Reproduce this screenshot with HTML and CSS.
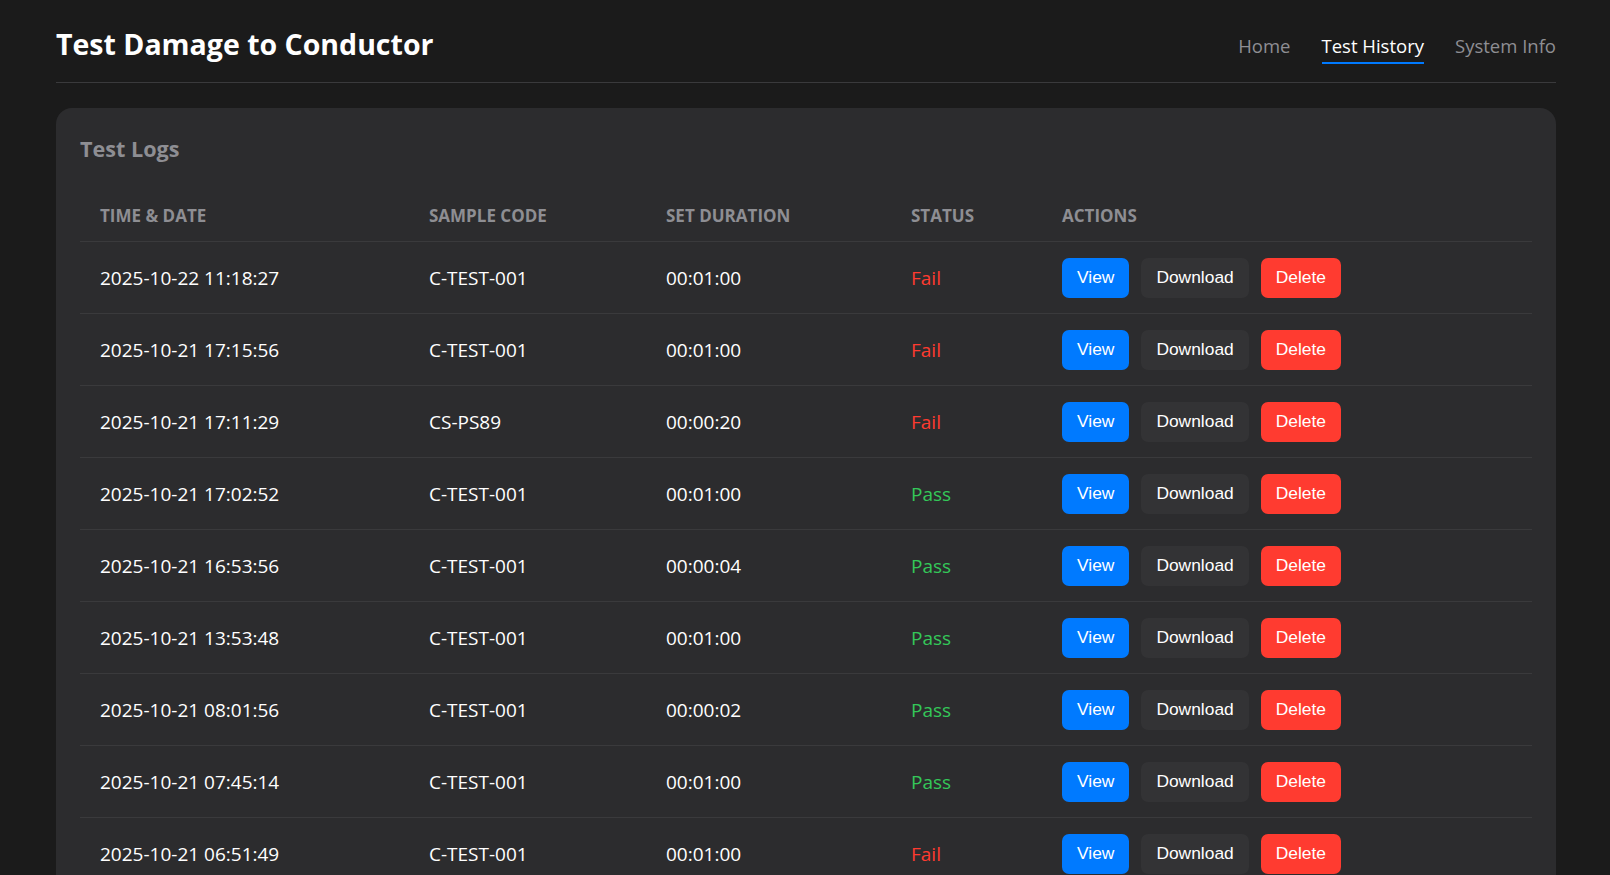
FILE: index.html
```html
<!DOCTYPE html>
<html lang="en">
<head>
<meta charset="utf-8">
<title>Test Damage to Conductor</title>
<link rel="stylesheet" href="styles.css">
</head>
<body>
<div class="container">
  <header class="site-header">
    <h1 class="site-title">Test Damage to Conductor</h1>
    <nav class="site-nav">
      <a class="nav-link" href="#">Home</a>
      <a class="nav-link active" href="#">Test History</a>
      <a class="nav-link" href="#">System Info</a>
    </nav>
  </header>

  <main class="card">
    <h2 class="card-title">Test Logs</h2>
    <table class="logs">
      <colgroup>
        <col class="c-time">
        <col class="c-code">
        <col class="c-dur">
        <col class="c-status">
        <col class="c-actions">
      </colgroup>
      <thead>
        <tr>
          <th>Time &amp; Date</th>
          <th>Sample Code</th>
          <th>Set Duration</th>
          <th>Status</th>
          <th>Actions</th>
        </tr>
      </thead>
      <tbody>
        <tr><td>2025-10-22 11:18:27</td><td>C-TEST-001</td><td>00:01:00</td><td class="fail">Fail</td><td><div class="actions"><button class="btn btn-view">View</button><button class="btn btn-dl">Download</button><button class="btn btn-del">Delete</button></div></td></tr>
        <tr><td>2025-10-21 17:15:56</td><td>C-TEST-001</td><td>00:01:00</td><td class="fail">Fail</td><td><div class="actions"><button class="btn btn-view">View</button><button class="btn btn-dl">Download</button><button class="btn btn-del">Delete</button></div></td></tr>
        <tr><td>2025-10-21 17:11:29</td><td>CS-PS89</td><td>00:00:20</td><td class="fail">Fail</td><td><div class="actions"><button class="btn btn-view">View</button><button class="btn btn-dl">Download</button><button class="btn btn-del">Delete</button></div></td></tr>
        <tr><td>2025-10-21 17:02:52</td><td>C-TEST-001</td><td>00:01:00</td><td class="pass">Pass</td><td><div class="actions"><button class="btn btn-view">View</button><button class="btn btn-dl">Download</button><button class="btn btn-del">Delete</button></div></td></tr>
        <tr><td>2025-10-21 16:53:56</td><td>C-TEST-001</td><td>00:00:04</td><td class="pass">Pass</td><td><div class="actions"><button class="btn btn-view">View</button><button class="btn btn-dl">Download</button><button class="btn btn-del">Delete</button></div></td></tr>
        <tr><td>2025-10-21 13:53:48</td><td>C-TEST-001</td><td>00:01:00</td><td class="pass">Pass</td><td><div class="actions"><button class="btn btn-view">View</button><button class="btn btn-dl">Download</button><button class="btn btn-del">Delete</button></div></td></tr>
        <tr><td>2025-10-21 08:01:56</td><td>C-TEST-001</td><td>00:00:02</td><td class="pass">Pass</td><td><div class="actions"><button class="btn btn-view">View</button><button class="btn btn-dl">Download</button><button class="btn btn-del">Delete</button></div></td></tr>
        <tr><td>2025-10-21 07:45:14</td><td>C-TEST-001</td><td>00:01:00</td><td class="pass">Pass</td><td><div class="actions"><button class="btn btn-view">View</button><button class="btn btn-dl">Download</button><button class="btn btn-del">Delete</button></div></td></tr>
        <tr><td>2025-10-21 06:51:49</td><td>C-TEST-001</td><td>00:01:00</td><td class="fail">Fail</td><td><div class="actions"><button class="btn btn-view">View</button><button class="btn btn-dl">Download</button><button class="btn btn-del">Delete</button></div></td></tr>
      </tbody>
    </table>
  </main>
</div>
</body>
</html>
```

FILE: styles.css
```css
html, body {
  margin: 0;
  padding: 0;
  background: #1b1b1b;
}

body {
  font-family: "Open Sans", "Noto Sans", sans-serif;
  color: #ffffff;
}

.container {
  width: 1500px;
  margin: 0 54px 0 56px;
}

.site-header {
  display: flex;
  justify-content: space-between;
  align-items: center;
  padding: 24px 0 18px;
  border-bottom: 1px solid #3a3a3c;
}

.site-title {
  margin: 0;
  font-size: 28.5px;
  font-weight: 700;
  line-height: 40px;
  color: #ffffff;
}

.site-nav {
  display: flex;
  gap: 31px;
  align-self: flex-end;
}

.nav-link {
  font-size: 18.5px;
  line-height: 25px;
  color: #8e8e93;
  text-decoration: none;
  padding-bottom: 4px;
  border-bottom: 2px solid transparent;
}

.nav-link.active {
  color: #ffffff;
  border-bottom-color: #007aff;
}

.card {
  display: block;
  margin-top: 25px;
  background: #2c2c2e;
  border-radius: 16px;
  padding: 26px 24px 25px;
}

.card-title {
  margin: 0 0 26px;
  font-size: 21.6px;
  font-weight: 700;
  line-height: 30px;
  color: #8e8e93;
}

.logs {
  width: 100%;
  table-layout: fixed;
  border-collapse: collapse;
}

.c-time { width: 329px; }
.c-code { width: 237px; }
.c-dur { width: 245px; }
.c-status { width: 151px; }

.logs th {
  text-align: left;
  font-size: 17px;
  font-weight: 700;
  text-transform: uppercase;
  color: #8e8e93;
  padding: 14px 20px 14px;
  line-height: 23px;
  border-bottom: 1px solid #3a3a3c;
}

.logs td {
  font-size: 19px;
  padding: 15.5px 20px;
  line-height: 26px;
  border-bottom: 1px solid #3a3a3c;
  vertical-align: middle;
  color: #ffffff;
}

.logs td.fail { color: #ff3b30; }
.logs td.pass { color: #34c759; }

.actions {
  display: flex;
  gap: 12px;
}

.btn {
  height: 40px;
  padding: 0 15px;
  border: none;
  border-radius: 7px;
  font-family: "Liberation Sans", Arial, sans-serif;
  font-size: 17.4px;
  color: #ffffff;
  cursor: pointer;
}

.btn-view { background: #007aff; }
.btn-dl { background: #333335; }
.btn-del { background: #ff3b30; }
```
